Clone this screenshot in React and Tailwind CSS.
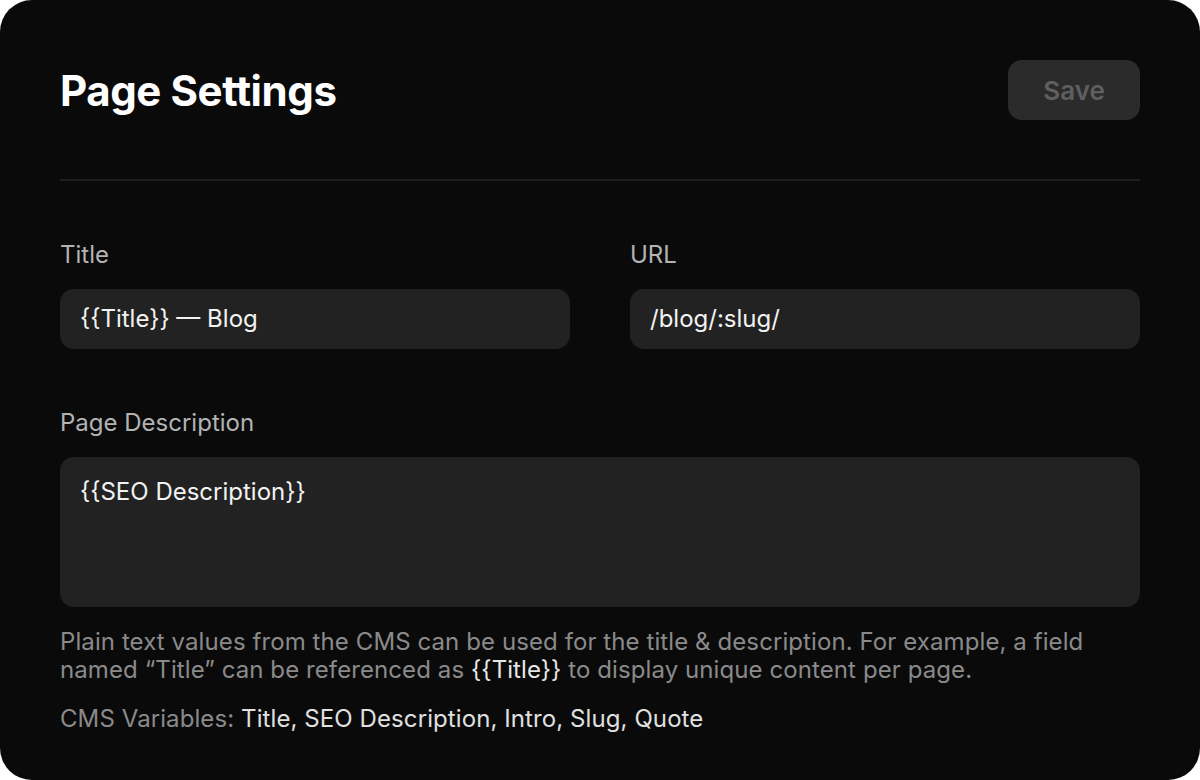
import React from "react";

const Field = ({ label, value, className = "" }) => (
  <div className={"flex flex-col gap-[19px] " + className}>
    <label className="text-[24px] leading-[30px] text-[#b3b3b3]">{label}</label>
    <div className="h-[60px] rounded-[14px] bg-[#222222] px-[20px] flex items-center text-[24px] text-[#f2f2f2]">
      {value}
    </div>
  </div>
);

const App = () => {
  return (
    <div className="w-[1200px] h-[780px] bg-white" style={{ fontFamily: "Inter, 'Noto Sans', sans-serif" }}>
      <div className="w-full h-full rounded-[32px] bg-[#0a0a0a] px-[60px] pt-[60px]">
        {/* header */}
        <div className="flex items-center justify-between h-[60px]">
          <h1 className="text-[42px] font-bold tracking-[-0.01em] text-white">Page Settings</h1>
          <button className="w-[132px] h-[60px] rounded-[14px] bg-[#2b2b2b] text-[26px] font-semibold text-[#5f5f5f]">
            Save
          </button>
        </div>
        <div className="mt-[59px] h-[2px] bg-[#1e1e1e]" />

        <div className="mt-[59px] grid grid-cols-2 gap-[60px]">
          <Field label="Title" value="{{Title}} — Blog" />
          <Field label="URL" value="/blog/:slug/" />
        </div>

        <div className="mt-[59px] flex flex-col gap-[19px]">
          <label className="text-[24px] leading-[30px] text-[#b3b3b3]">Page Description</label>
          <div className="h-[150px] rounded-[14px] bg-[#222222] px-[20px] pt-[17px] text-[24px] text-[#f2f2f2]">
            {"{{SEO Description}}"}
          </div>
        </div>

        {/* help */}
        <p className="mt-[21px] text-[24px] leading-[28px] tracking-[0.09px] text-[#8a8a8a]">
          Plain text values from the CMS can be used for the title &amp; description. For example, a field named “Title” can be referenced as{" "}
          <span className="text-[#e6e6e6]">{"{{Title}}"}</span> to display unique content per page.
        </p>
        <p className="mt-[21px] text-[24px] leading-[28px] tracking-[0.09px] text-[#8a8a8a]">
          CMS Variables: <span className="text-[#e0e0e0]">Title, SEO Description, Intro, Slug, Quote</span>
        </p>
      </div>
    </div>
  );
};

export default App;
